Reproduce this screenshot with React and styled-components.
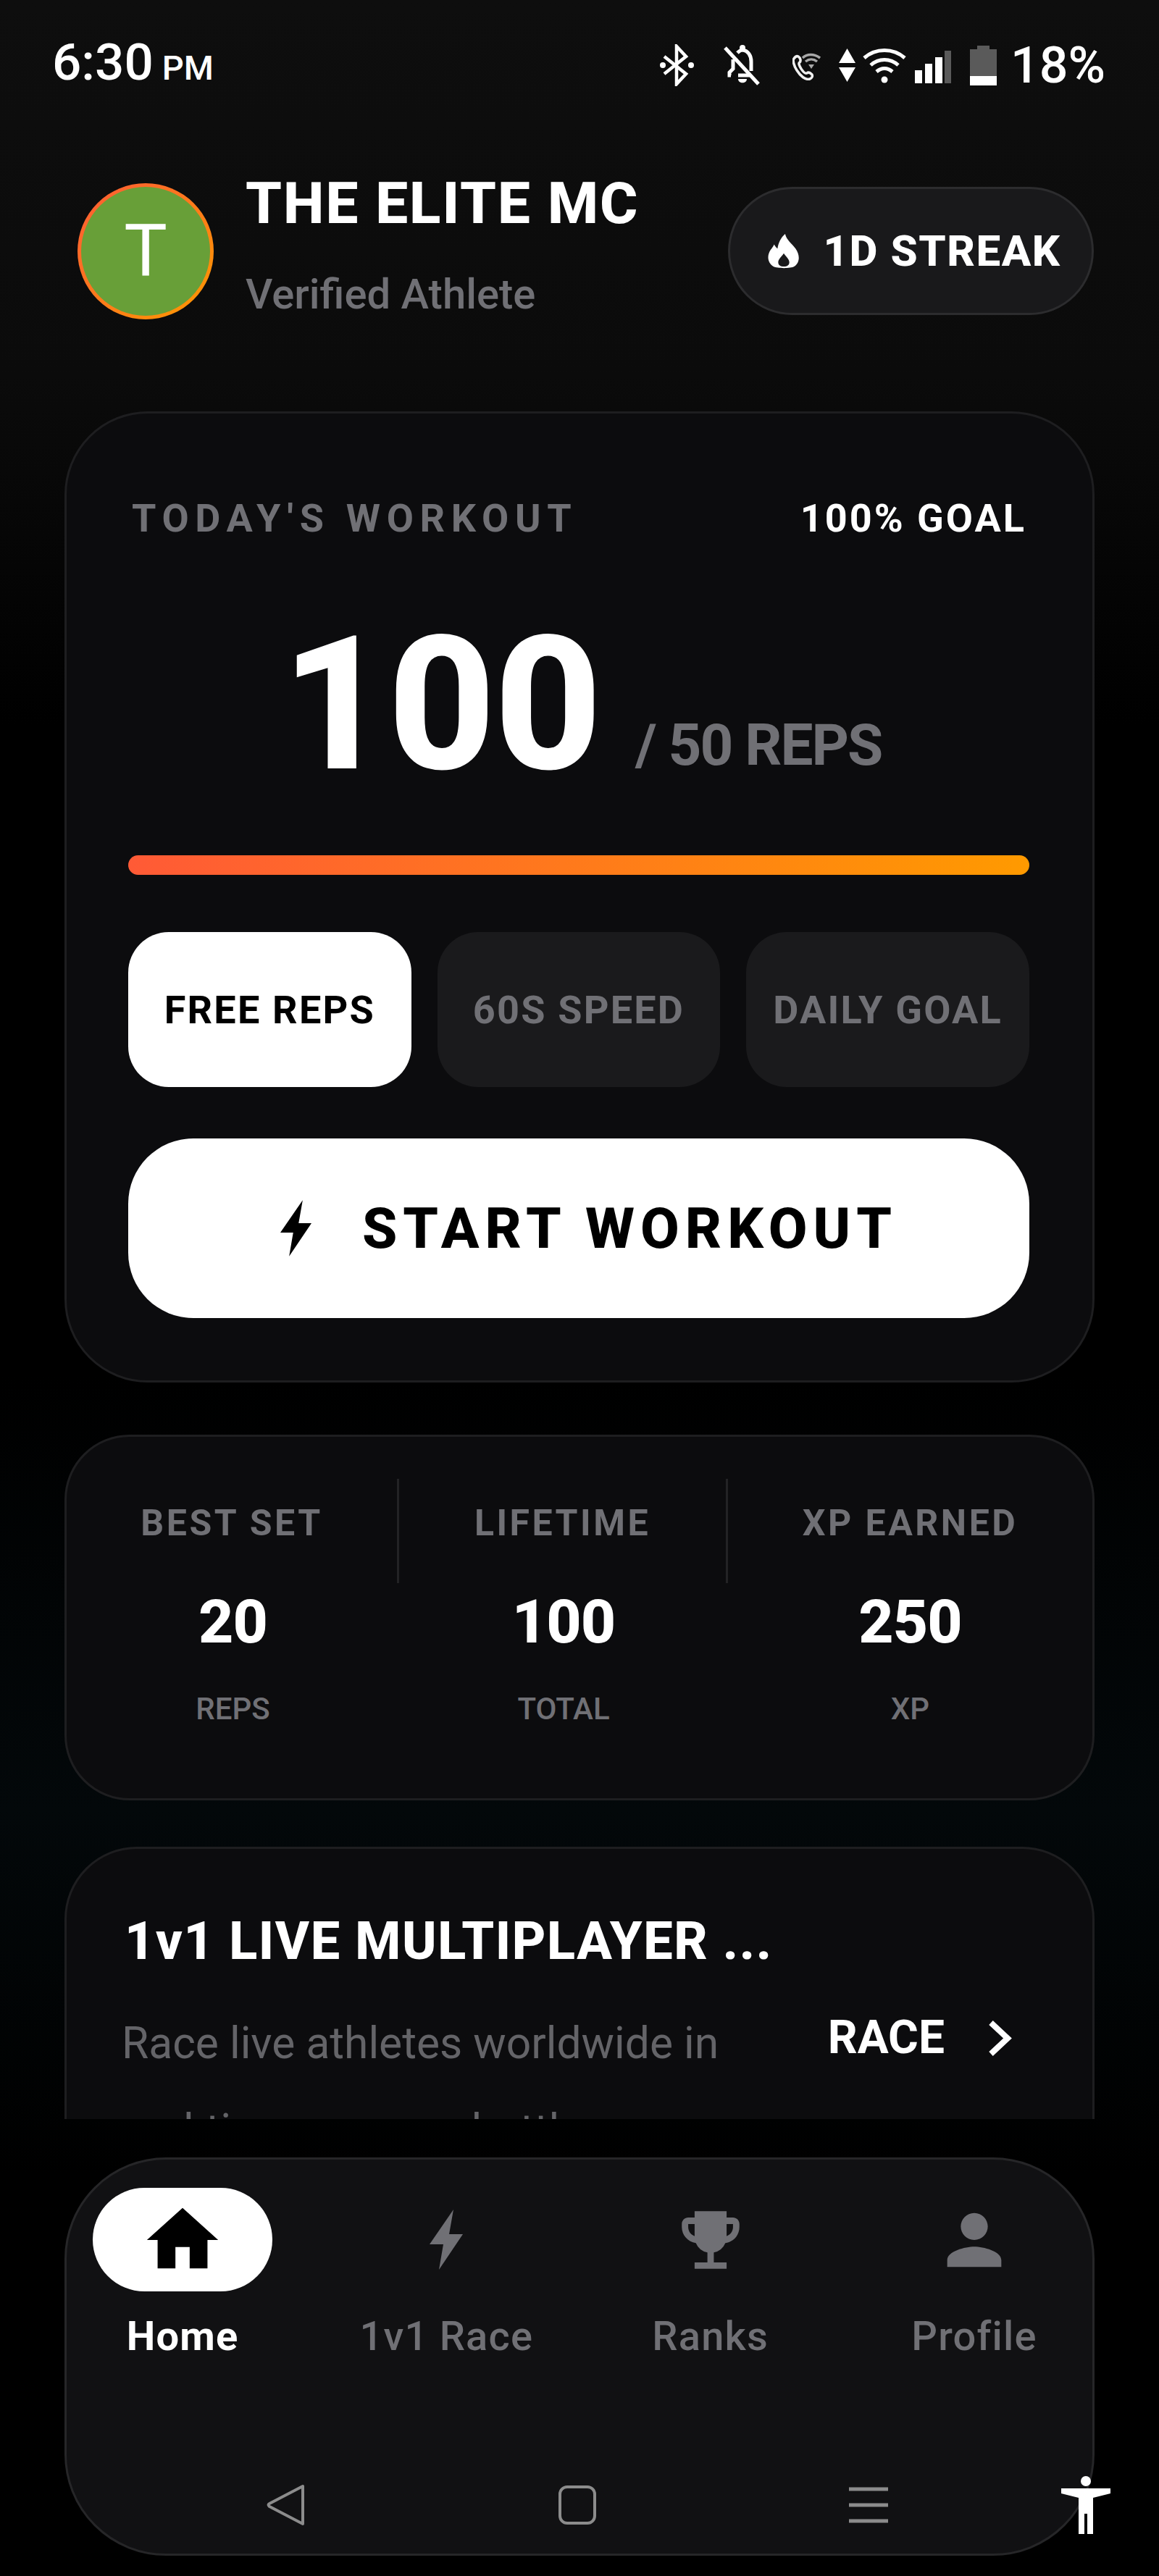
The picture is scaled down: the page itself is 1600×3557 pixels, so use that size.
import React from 'react';
import styled, { createGlobalStyle } from 'styled-components';
import { MdHome, MdPerson, MdEmojiEvents } from 'react-icons/md';

const GlobalStyle = createGlobalStyle`
  html, body {
    margin: 0;
    padding: 0;
    background: #000;
  }

  * {
    box-sizing: border-box;
  }
`;

const Screen = styled.div`
  width: 1600px;
  height: 3557px;
  display: flex;
  flex-direction: column;
  overflow: hidden;
  position: relative;
  font-family: Roboto, "Liberation Sans", sans-serif;
  color: #fff;
  background: linear-gradient(180deg, #0e0e0e 0, #0b0b0b 520px, #000 1000px, #000 1900px, #03080a 2500px, #000 3000px);
`;

const StatusBar = styled.div`
  height: 180px;
  flex: none;
  display: flex;
  align-items: center;
  padding: 0 74px 0 72px;
`;

const Clock = styled.div`
  font-size: 71px;
  line-height: 70px;
  font-weight: 500;
  white-space: nowrap;
  span {
    font-size: 47px;
    margin-left: 12px;
  }
`;

const StatusIcons = styled.div`
  margin-left: auto;
  display: flex;
  align-items: center;
`;

const StatusIcon = styled.svg`
  flex: none;
  display: block;
  margin-left: ${(p) => p.$gap || 0}px;
  transform: translateY(${(p) => p.$shift || 0}px);
`;

const Battery = styled.div`
  font-size: 70px;
  line-height: 70px;
  font-weight: 500;
  margin-left: 19px;
`;

const Header = styled.header`
  flex: none;
  height: 188px;
  margin-top: 73px;
  padding: 0 90px 0 107px;
  display: flex;
  align-items: flex-start;
`;

const Avatar = styled.div`
  width: 188px;
  height: 188px;
  flex: none;
  border-radius: 50%;
  padding: 5px;
  background: linear-gradient(135deg, #ff5a36, #ff9a00);
`;

const AvatarFace = styled.div`
  width: 100%;
  height: 100%;
  border-radius: 50%;
  background: #689f38;
  display: flex;
  align-items: center;
  justify-content: center;
  font-size: 100px;
  font-weight: 400;
  line-height: 1;
`;

const Identity = styled.div`
  margin-left: 44px;
  display: flex;
  flex-direction: column;
  gap: 69px;
`;

const Name = styled.div`
  font-size: 80px;
  line-height: 56px;
  font-weight: 800;
  letter-spacing: 2px;
  white-space: nowrap;
`;

const Subtitle = styled.div`
  font-size: 58px;
  line-height: 56px;
  font-weight: 500;
  color: #707075;
  white-space: nowrap;
`;

const StreakPill = styled.div`
  margin: 5px 0 0 auto;
  width: 505px;
  height: 177px;
  padding-left: 10px;
  border-radius: 89px;
  background: #19191b;
  border: 3px solid #2c2c2e;
  display: flex;
  align-items: center;
  justify-content: center;
  gap: 32px;
  font-size: 60px;
  font-weight: 800;
  letter-spacing: 1.5px;
  white-space: nowrap;
`;

const ScrollArea = styled.main`
  flex: none;
  height: 2358px;
  margin-top: 127px;
  padding: 0 89px;
  overflow: hidden;
  display: flex;
  flex-direction: column;
`;

const Card = styled.section`
  flex: none;
  background: #0c0c0e;
  border: 3px solid #1e1e20;
  border-radius: ${(p) => p.$radius || 100}px;
  margin-top: ${(p) => p.$top || 0}px;
`;

const WorkoutCard = styled(Card)`
  padding: 118px 87px 86px 85px;
`;

const WorkoutTop = styled.div`
  display: flex;
  justify-content: space-between;
  padding: 0 4px 0 5px;
  font-size: 54px;
  line-height: 54px;
  font-weight: 700;
  white-space: nowrap;
`;

const Eyebrow = styled.div`
  color: #707075;
  letter-spacing: 8.7px;
`;

const GoalText = styled.div`
  color: #fff;
  letter-spacing: 3px;
`;

const Hero = styled.div`
  margin-top: 99px;
  height: 262px;
  padding-left: 8px;
  display: flex;
  justify-content: center;
  align-items: flex-end;
  gap: 48px;
  white-space: nowrap;
`;

const HeroValue = styled.div`
  font-size: 258px;
  line-height: 262px;
  font-weight: 800;
  letter-spacing: -2px;
`;

const HeroTarget = styled.div`
  font-size: 80px;
  line-height: 84px;
  font-weight: 700;
  letter-spacing: -2px;
  color: #707075;
  margin-bottom: 33px;
`;

const ProgressTrack = styled.div`
  margin-top: 77px;
  height: 27px;
  border-radius: 14px;
  overflow: hidden;
  background: #1a1a1c;
`;

const ProgressFill = styled.div`
  height: 100%;
  background: linear-gradient(90deg, #ff5a36, #ff9a00);
`;

const Tabs = styled.div`
  margin-top: 79px;
  display: grid;
  grid-template-columns: repeat(3, 1fr);
  gap: 36px;
`;

const Tab = styled.div`
  height: 214px;
  border-radius: 56px;
  display: flex;
  align-items: center;
  justify-content: center;
  background: ${(p) => (p.$active ? '#fff' : '#1a1a1c')};
  color: ${(p) => (p.$active ? '#000' : '#707075')};
  font-size: 54px;
  font-weight: 700;
  letter-spacing: 2.2px;
  white-space: nowrap;
`;

const StartButton = styled.div`
  margin-top: 71px;
  height: 248px;
  padding-left: 28px;
  border-radius: 90px;
  background: #fff;
  color: #000;
  display: flex;
  align-items: center;
  justify-content: center;
  gap: 70px;
  font-size: 78px;
  font-weight: 800;
  letter-spacing: 8px;
  white-space: nowrap;
`;

const StatsCard = styled(Card)`
  height: 505px;
  padding-top: 58px;
  display: grid;
  grid-template-columns: 459px 454px 503px;
`;

const StatColumn = styled.div`
  display: flex;
  flex-direction: column;
  align-items: center;
`;

const StatLabel = styled.div`
  align-self: stretch;
  height: 144px;
  padding-top: 36px;
  text-align: center;
  font-size: 50px;
  line-height: 50px;
  font-weight: 700;
  letter-spacing: 3.5px;
  color: #707075;
  white-space: nowrap;
  border-right: ${(p) => (p.$divider ? '3px solid #232325' : '0')};
`;

const StatValue = styled.div`
  margin-top: 12px;
  font-size: 84px;
  line-height: 84px;
  font-weight: 800;
  letter-spacing: -1px;
`;

const StatUnit = styled.div`
  margin-top: 57px;
  font-size: 42px;
  line-height: 42px;
  font-weight: 500;
  color: #707075;
`;

const RaceCard = styled(Card)`
  height: 600px;
  padding: 92px 111px 0 80px;
`;

const RaceTitle = styled.div`
  font-size: 72px;
  line-height: 72px;
  font-weight: 800;
  letter-spacing: 1.6px;
  white-space: nowrap;
`;

const RaceRow = styled.div`
  margin-top: 45px;
  margin-left: -4px;
  display: flex;
  justify-content: space-between;
  align-items: flex-start;
`;

const RaceText = styled.div`
  width: 880px;
  font-size: 60.5px;
  line-height: 120px;
  color: #646468;
`;

const RaceAction = styled.div`
  margin-top: 21px;
  display: flex;
  align-items: center;
  gap: 59px;
  font-size: 64px;
  line-height: 62px;
  font-weight: 700;
`;

const BottomNav = styled.nav`
  flex: none;
  height: 550px;
  margin: 53px 89px 0;
  padding: 39px 39px 37px 36px;
  background: #111113;
  border: 3px solid #262628;
  border-radius: 140px;
  display: flex;
  flex-direction: column;
  justify-content: space-between;
  position: relative;
`;

const NavItems = styled.div`
  display: flex;
  justify-content: space-between;
`;

const NavItem = styled.div`
  width: 248px;
  display: flex;
  flex-direction: column;
  align-items: center;
  gap: 34px;
  font-size: 56px;
  line-height: 56px;
  font-weight: ${(p) => (p.$active ? 700 : 500)};
  letter-spacing: 1.2px;
  white-space: nowrap;
  color: ${(p) => (p.$active ? '#fff' : '#707075')};
`;

const NavIcon = styled.div`
  width: 248px;
  height: 143px;
  border-radius: 72px;
  display: flex;
  align-items: center;
  justify-content: center;
  background: ${(p) => (p.$active ? '#fff' : 'transparent')};
  color: ${(p) => (p.$active ? '#000' : '#707075')};
`;

const SystemBar = styled.div`
  display: flex;
  justify-content: space-between;
  align-items: center;
  padding: 0 243px 0 240px;
  color: #8c8c8c;
`;

const AccessibilityButton = styled.svg`
  position: absolute;
  right: -27px;
  bottom: 27px;
  display: block;
`;

function Bolt({ width, height, color = 'currentColor' }) {
  return (
    <svg width={width} height={height} viewBox="0 0 46 83" style={{ display: 'block', flex: 'none' }}>
      <path d="M33 0 L0 48 L19 48 L13 83 L46 34 L27 34 Z" fill={color} />
    </svg>
  );
}

function Flame() {
  return (
    <svg width="44" height="50" viewBox="0 0 46 50" style={{ display: 'block', flex: 'none' }}>
      <path
        fillRule="evenodd"
        d="M25 0 C27 9 34 13 40 21 C47 31 46 42 38 47 C33 50 14 50 8 47 C0 42 -2 32 4 23 C6 20 8 18 9 15 C11 18 12 20 14 21 C15 13 19 5 25 0 Z M23 28 C20 33 15 36 15 41 C15 45 18 47 23 47 C28 47 31 45 31 41 C31 36 26 33 23 28 Z"
        fill="#fff"
      />
    </svg>
  );
}

export default function App() {
  return (
    <Screen>
      <GlobalStyle />
      <StatusBar>
        <Clock>
          6:30<span>PM</span>
        </Clock>
        <StatusIcons>
          <StatusIcon width="47" height="58" viewBox="0 0 47 58" $shift={0}>
            <path d="M6 17 L36 41 L23 55 L23 3 L36 17 L6 41" fill="none" stroke="#fff" strokeWidth="4.5" />
            <circle cx="4" cy="29" r="4" fill="#fff" />
            <circle cx="43" cy="29" r="4" fill="#fff" />
          </StatusIcon>
          <StatusIcon width="54" height="56" viewBox="0 0 54 56" $gap={39}>
            <path d="M12 42 L10 42 L10 38 L15 33 L15 20 M21 11 C24 8 26 7 28 7 C36 8 40 15 40 23 L40 36 M22 42 L38 42" fill="none" stroke="#fff" strokeWidth="5" />
            <path d="M4 4 L50 54" stroke="#fff" strokeWidth="5" />
            <path d="M22 47 C22 54 34 54 34 47 Z" fill="#fff" />
            <circle cx="28" cy="4" r="4" fill="#fff" />
          </StatusIcon>
          <StatusIcon width="39" height="38" viewBox="0 0 39 38" $gap={43} $shift={2}>
            <path d="M2 8 C0 10 2 18 6 24 C11 32 18 38 24 36 C27 35 28 32 27 30 C25 28 22 26 20 28 C18 29 16 28 12 22 C9 17 8 14 10 13 C12 11 11 7 8 5 C6 4 4 5 2 8 Z" fill="none" stroke="#f0f0f0" strokeWidth="3.5" />
            <path d="M14 7 C20 1 30 1 38 7 M18 12 C23 8 29 8 34 12" fill="none" stroke="#a8a8a8" strokeWidth="3.5" />
            <path d="M22 16 L30 16 L26 22 Z" fill="#a8a8a8" />
          </StatusIcon>
          <StatusIcon width="23" height="46" viewBox="0 0 23 46" $gap={25}>
            <path d="M11.5 0 L23 20 L0 20 Z M0 26 L23 26 L11.5 46 Z" fill="#fff" />
          </StatusIcon>
          <StatusIcon width="60" height="50" viewBox="0 0 60 50" $gap={10}>
            <path d="M2 15 C18 1 42 1 58 15 M11 25 C22 15 38 15 49 25 M19 34 C26 28 34 28 41 34" fill="none" stroke="#fff" strokeWidth="5" />
            <circle cx="30" cy="45" r="4.5" fill="#fff" />
          </StatusIcon>
          <StatusIcon width="50" height="45" viewBox="0 0 50 45" $gap={12} $shift={2}>
            <rect x="0" y="27" width="10" height="18" fill="#fff" />
            <rect x="14" y="18" width="10" height="27" fill="#fff" />
            <rect x="28" y="9" width="10" height="36" fill="#fff" />
            <rect x="41" y="0" width="9" height="45" fill="#5a5a5a" />
          </StatusIcon>
          <StatusIcon width="37" height="55" viewBox="0 0 37 55" $gap={26}>
            <path d="M0 5 L10 5 L10 0 L27 0 L27 5 L37 5 L37 42 L0 42 Z" fill="#5a5a5a" />
            <rect x="0" y="42" width="37" height="13" fill="#fff" />
          </StatusIcon>
          <Battery>18%</Battery>
        </StatusIcons>
      </StatusBar>

      <Header>
        <Avatar>
          <AvatarFace>T</AvatarFace>
        </Avatar>
        <Identity>
          <Name>THE ELITE MC</Name>
          <Subtitle>Verified Athlete</Subtitle>
        </Identity>
        <StreakPill>
          <Flame />
          1D STREAK
        </StreakPill>
      </Header>

      <ScrollArea>
        <WorkoutCard $radius={115}>
          <WorkoutTop>
            <Eyebrow>TODAY'S WORKOUT</Eyebrow>
            <GoalText>100% GOAL</GoalText>
          </WorkoutTop>
          <Hero>
            <HeroValue>100</HeroValue>
            <HeroTarget>/ 50 REPS</HeroTarget>
          </Hero>
          <ProgressTrack>
            <ProgressFill style={{ width: `${Math.min(100, (100 / 50) * 100)}%` }} />
          </ProgressTrack>
          <Tabs>
            <Tab $active>FREE REPS</Tab>
            <Tab>60S SPEED</Tab>
            <Tab>DAILY GOAL</Tab>
          </Tabs>
          <StartButton>
            <Bolt width={43} height={80} />
            START WORKOUT
          </StartButton>
        </WorkoutCard>

        <StatsCard $top={72} $radius={90}>
          <StatColumn>
            <StatLabel $divider>BEST SET</StatLabel>
            <StatValue>20</StatValue>
            <StatUnit>REPS</StatUnit>
          </StatColumn>
          <StatColumn>
            <StatLabel $divider>LIFETIME</StatLabel>
            <StatValue>100</StatValue>
            <StatUnit>TOTAL</StatUnit>
          </StatColumn>
          <StatColumn>
            <StatLabel>XP EARNED</StatLabel>
            <StatValue>250</StatValue>
            <StatUnit>XP</StatUnit>
          </StatColumn>
        </StatsCard>

        <RaceCard $top={64} $radius={100}>
          <RaceTitle>1v1 LIVE MULTIPLAYER ...</RaceTitle>
          <RaceRow>
            <RaceText>Race live athletes worldwide in real-time rep race battles</RaceText>
            <RaceAction>
              RACE
              <svg width="34" height="51" viewBox="0 0 34 51" style={{ display: 'block' }}>
                <path d="M5 4 L28 25.5 L5 47" fill="none" stroke="#fff" strokeWidth="8" />
              </svg>
            </RaceAction>
          </RaceRow>
        </RaceCard>
      </ScrollArea>

      <BottomNav>
        <NavItems>
          <NavItem $active>
            <NavIcon $active>
              <MdHome size={118} />
            </NavIcon>
            Home
          </NavItem>
          <NavItem>
            <NavIcon>
              <Bolt width={46} height={83} />
            </NavIcon>
            1v1 Race
          </NavItem>
          <NavItem>
            <NavIcon>
              <MdEmojiEvents size={106} />
            </NavIcon>
            Ranks
          </NavItem>
          <NavItem>
            <NavIcon>
              <MdPerson size={112} />
            </NavIcon>
            Profile
          </NavItem>
        </NavItems>
        <SystemBar>
          <svg width="54" height="60" viewBox="0 0 54 60">
            <path d="M50 4 L50 56 L4 32 C2 30 2 29 4 28 Z" fill="none" stroke="currentColor" strokeWidth="4" strokeLinejoin="round" />
          </svg>
          <svg width="54" height="56" viewBox="0 0 54 56">
            <rect x="3" y="3" width="48" height="50" rx="10" fill="none" stroke="currentColor" strokeWidth="4" />
          </svg>
          <svg width="54" height="50" viewBox="0 0 54 50">
            <path d="M0 3 H54 M0 25 H54 M0 47 H54" stroke="currentColor" strokeWidth="5" />
          </svg>
        </SystemBar>
        <AccessibilityButton width="72" height="80" viewBox="0 0 72 80">
          <circle cx="36" cy="7" r="7" fill="#fff" />
          <path d="M2 17 L70 17 L70 24 L46 30 L46 80 L38 80 L38 52 L34 52 L34 80 L26 80 L26 30 L2 24 Z" fill="#fff" />
        </AccessibilityButton>
      </BottomNav>
    </Screen>
  );
}
